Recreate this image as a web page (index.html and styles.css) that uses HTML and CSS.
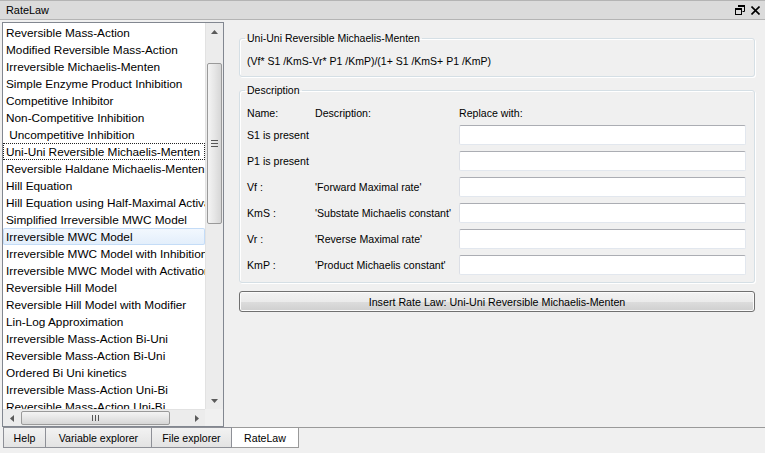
FILE: index.html
```html
<!DOCTYPE html>
<html>
<head>
<meta charset="utf-8">
<link rel="stylesheet" href="styles.css">
</head>
<body>
<div class="titlebar">
  <span class="title">RateLaw</span>
  <span class="winbtns">
    <svg width="10" height="10" viewBox="0 0 10 10"><path d="M3.5 0.5h6v6h-2" fill="none" stroke="#000"/><path d="M3 1h7" stroke="#000" stroke-width="2"/><rect x="0.5" y="3.5" width="6" height="6" fill="none" stroke="#000"/><path d="M0 4h7" stroke="#000" stroke-width="2"/></svg>
    <svg width="9" height="9" viewBox="0 0 9 9"><path d="M0.5 0.5l8 8M8.5 0.5l-8 8" stroke="#000" stroke-width="1.6"/></svg>
  </span>
</div>
<div class="main">
  <div class="listpanel">
    <div class="listarea">
      <div class="list">
        <div class="item">Reversible Mass-Action</div>
        <div class="item">Modified Reversible Mass-Action</div>
        <div class="item">Irreversible Michaelis-Menten</div>
        <div class="item">Simple Enzyme Product Inhibition</div>
        <div class="item">Competitive Inhibitor</div>
        <div class="item">Non-Competitive Inhibition</div>
        <div class="item">&nbsp;Uncompetitive Inhibition</div>
        <div class="item selected">Uni-Uni Reversible Michaelis-Menten</div>
        <div class="item">Reversible Haldane Michaelis-Menten</div>
        <div class="item">Hill Equation</div>
        <div class="item">Hill Equation using Half-Maximal Activation</div>
        <div class="item">Simplified Irreversible MWC Model</div>
        <div class="item hover">Irreversible MWC Model</div>
        <div class="item">Irreversible MWC Model with Inhibition</div>
        <div class="item">Irreversible MWC Model with Activation</div>
        <div class="item">Reversible Hill Model</div>
        <div class="item">Reversible Hill Model with Modifier</div>
        <div class="item">Lin-Log Approximation</div>
        <div class="item">Irreversible Mass-Action Bi-Uni</div>
        <div class="item">Reversible Mass-Action Bi-Uni</div>
        <div class="item">Ordered Bi Uni kinetics</div>
        <div class="item">Irreversible Mass-Action Uni-Bi</div>
        <div class="item">Reversible Mass-Action Uni-Bi</div>
      </div>
      <div class="vscroll">
        <div class="sbtn"><svg width="7" height="4" viewBox="0 0 7 4"><path d="M0 4L3.5 0L7 4z" fill="#5a5a5a"/></svg></div>
        <div class="vtrack">
          <div class="vthumb"><span class="grip-h"></span></div>
        </div>
        <div class="sbtn"><svg width="7" height="4" viewBox="0 0 7 4"><path d="M0 0L3.5 4L7 0z" fill="#5a5a5a"/></svg></div>
      </div>
      <div class="hscroll">
        <div class="hbtn"><svg width="4" height="7" viewBox="0 0 4 7"><path d="M4 0L0 3.5L4 7z" fill="#5a5a5a"/></svg></div>
        <div class="htrack">
          <div class="hthumb"><span class="grip-v"></span></div>
        </div>
        <div class="hbtn"><svg width="4" height="7" viewBox="0 0 4 7"><path d="M0 0L4 3.5L0 7z" fill="#5a5a5a"/></svg></div>
      </div>
      <div class="corner"></div>
    </div>
  </div>
  <div class="content">
    <fieldset class="group g1">
      <legend>Uni-Uni Reversible Michaelis-Menten</legend>
      <div class="formula">(Vf* S1 /KmS-Vr* P1 /KmP)/(1+ S1 /KmS+ P1 /KmP)</div>
    </fieldset>
    <fieldset class="group g2">
      <legend>Description</legend>
      <div class="params">
        <div class="hdr">Name:</div><div class="hdr">Description:</div><div class="hdr">Replace with:</div>
        <div class="lbl span2">S1 is present</div><div class="inp"></div>
        <div class="lbl span2">P1 is present</div><div class="inp"></div>
        <div class="lbl">Vf :</div><div class="lbl">'Forward Maximal rate'</div><div class="inp"></div>
        <div class="lbl">KmS :</div><div class="lbl">'Substate Michaelis constant'</div><div class="inp"></div>
        <div class="lbl">Vr :</div><div class="lbl">'Reverse Maximal rate'</div><div class="inp"></div>
        <div class="lbl">KmP :</div><div class="lbl">'Product Michaelis constant'</div><div class="inp"></div>
      </div>
    </fieldset>
    <div class="button">Insert Rate Law: Uni-Uni Reversible Michaelis-Menten</div>
  </div>
</div>
<div class="tabbar">
  <div class="tab t-help">Help</div>
  <div class="tab t-var">Variable explorer</div>
  <div class="tab t-file">File explorer</div>
  <div class="tab t-rate active">RateLaw</div>
  <div class="tabline"></div>
</div>
</body>
</html>
```
FILE: styles.css
```css
* { box-sizing: border-box; }
html, body { margin: 0; padding: 0; }
body {
  width: 765px;
  height: 453px;
  overflow: hidden;
  background: #f0f0f0;
  font-family: "Liberation Sans", Arial, sans-serif;
  font-size: 10.6px;
  color: #000;
}
.titlebar {
  height: 20px;
  background: #dbdbdb;
  border-top: 1px solid #b4b4b4;
  border-bottom: 1px solid #b4b4b4;
  display: flex;
  align-items: center;
  justify-content: space-between;
  padding: 0 5px 0 6px;
}
.title { font-size: 10.9px; }
.winbtns { display: flex; align-items: center; gap: 6px; }
.main {
  display: flex;
  height: 407px;
}
.listpanel {
  margin: 2px 0 0 2px;
  width: 222px;
  height: 405px;
  border: 1px solid #828790;
  background: #fff;
}
.listarea {
  display: grid;
  grid-template-columns: 202px 18px;
  grid-template-rows: 386px 17px;
  height: 100%;
}
.list {
  overflow: hidden;
  padding-top: 1px;
  font-size: 11.8px;
}
.item {
  height: 17px;
  line-height: 17px;
  padding-top: 1px;
  padding-left: 3px;
  white-space: nowrap;
  overflow: hidden;
}
.item.selected {
  outline: 1px dotted #222;
  outline-offset: -1px;
}
.item.hover {
  background: linear-gradient(#f3f8fe, #e2eefb);
  box-shadow: inset 0 0 0 1px #c4dcf7;
  border-radius: 2px;
}
.vscroll {
  display: flex;
  flex-direction: column;
  background: #ececec;
  border-left: 1px solid #e2e2e2;
}
.sbtn {
  height: 17px;
  display: flex;
  align-items: center;
  justify-content: center;
}
.vtrack { flex: 1; padding: 0 1px; }
.vthumb {
  margin-top: 23px;
  height: 161px;
  border: 1px solid #9a9a9a;
  border-radius: 2px;
  background: linear-gradient(90deg, #f4f4f4, #e6e6e6 50%, #d6d6d6);
  display: flex;
  align-items: center;
  justify-content: center;
}
.grip-h {
  width: 7px;
  height: 7px;
  background: linear-gradient(#555 0 1px, transparent 1px 3px, #555 3px 4px, transparent 4px 6px, #555 6px 7px);
}
.hscroll {
  display: flex;
  background: #ececec;
  border-top: 1px solid #e2e2e2;
}
.hbtn {
  width: 17px;
  display: flex;
  align-items: center;
  justify-content: center;
}
.htrack { flex: 1; padding: 1px 0; }
.hthumb {
  margin-left: 1px;
  width: 149px;
  height: 100%;
  border: 1px solid #9a9a9a;
  border-radius: 2px;
  background: linear-gradient(#f4f4f4, #e6e6e6 50%, #d6d6d6);
  display: flex;
  align-items: center;
  justify-content: center;
}
.grip-v {
  width: 7px;
  height: 6px;
  background: linear-gradient(90deg, #555 0 1px, transparent 1px 3px, #555 3px 4px, transparent 4px 6px, #555 6px 7px);
}
.corner { background: #f0f0f0; }
.content {
  flex: 1;
  padding: 12px 10px 0 15px;
}
.group {
  margin: 0;
  padding: 0 8px 0 7px;
  border: 1px solid #d5dfe5;
  border-radius: 3px;
  box-shadow: inset 1px 1px 0 #fff, 1px 1px 0 #fff;
  min-width: 0;
}
.group legend {
  padding: 0 2px;
  margin-left: -2px;
  line-height: 13px;
  font-size: 10.5px;
}
.formula {
  margin-top: 10px;
  line-height: 13px;
  padding-bottom: 8px;
  font-size: 10.5px;
}
.g2 { margin-top: 7px; padding-bottom: 7px; }
.params {
  display: grid;
  grid-template-columns: 68px 144px 1fr;
  grid-template-rows: 12px;
  grid-auto-rows: 20px;
  row-gap: 6px;
  margin-top: 10px;
  font-size: 10.6px;
}
.hdr { align-self: center; white-space: nowrap; }
.lbl { align-self: center; white-space: nowrap; }
.span2 { grid-column: span 2; }
.inp {
  background: #fff;
  border: 1px solid #e2e7ee;
  border-top-color: #abadb3;
  border-left-color: #dcdfe6;
  border-radius: 2px;
}
.button {
  margin-top: 8px;
  height: 21px;
  border: 1px solid #707070;
  border-radius: 3px;
  background: linear-gradient(#f2f2f2 0%, #ebebeb 50%, #dddddd 51%, #cfcfcf 100%);
  display: flex;
  align-items: center;
  justify-content: center;
  font-size: 10.7px;
  box-shadow: inset 0 0 0 1px #fbfbfb;
}
.tabbar {
  display: flex;
  padding-left: 3px;
  height: 26px;
}
.tab {
  height: 21px;
  display: flex;
  align-items: center;
  justify-content: center;
  border: 1px solid #8e9097;
  border-left: none;
  background: linear-gradient(#f2f2f2, #e3e3e3);
  font-size: 10.6px;
}
.t-help { width: 43px; border-left: 1px solid #8e9097; }
.t-var { width: 106px; }
.t-file { width: 80px; }
.t-rate { width: 67px; }
.tab.active {
  background: #fff;
  border-color: #9a9a9a;
}
.tabline {
  flex: 1;
  height: 1px;
  background: #9a9a9a;
}
```
